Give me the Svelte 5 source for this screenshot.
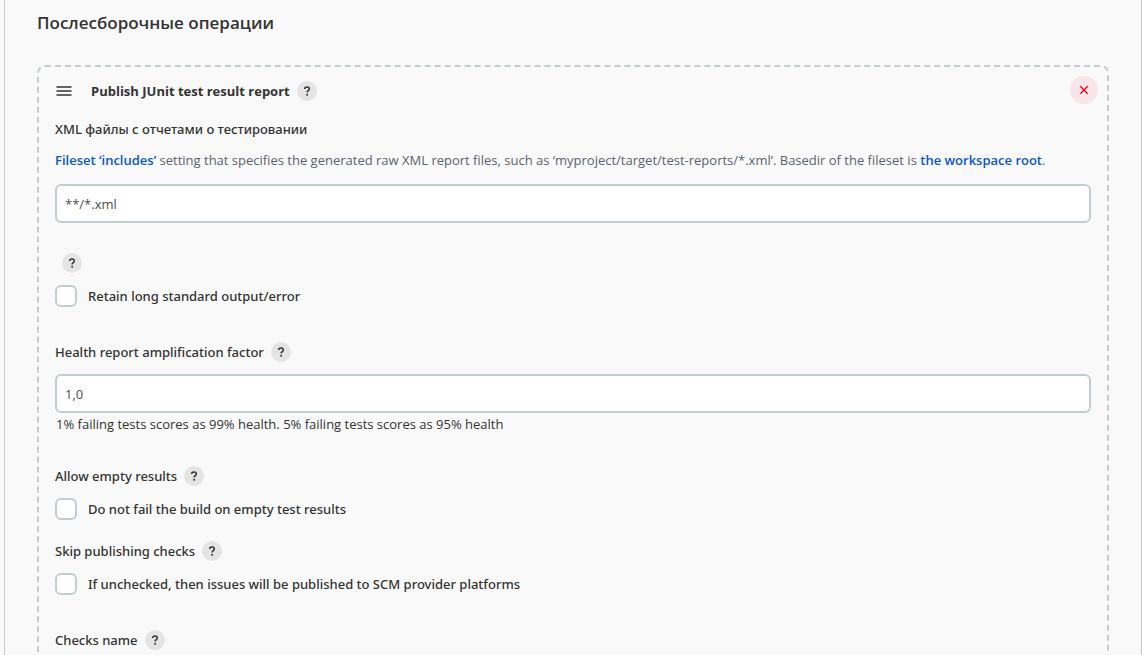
<script>
  let reports = $state('**/*.xml');
  let factor = $state('1,0');
  let retainOutput = $state(false);
  let allowEmpty = $state(false);
  let skipChecks = $state(false);
</script>

{#snippet help(topic)}
  <button type="button" class="help" aria-label={'Help for feature: ' + topic}>
    <svg viewBox="0 0 20 20" aria-hidden="true">
      <path d="M7.7 8.1C7.7 6.8 8.6 6 10 6s2.3.8 2.3 2c0 1.7-2.2 1.7-2.2 3.6" />
      <circle cx="10.1" cy="13.8" r="1" />
    </svg>
  </button>
{/snippet}

<main class="panel">
  <h2 class="section-title">Послесборочные операции</h2>

  <section class="chunk">
    <button type="button" class="remove" aria-label="Remove">
      <svg viewBox="0 0 28 28" aria-hidden="true">
        <path d="M10.3 10.3l7.4 7.4M17.7 10.3l-7.4 7.4" />
      </svg>
    </button>

    <header class="chunk-header">
      <svg class="drag" viewBox="0 0 16 10" aria-hidden="true">
        <path d="M.5 1h15M.5 5h15M.5 9h15" />
      </svg>
      <h3 class="chunk-title">Publish JUnit test result report</h3>
      {@render help('Publish JUnit test result report')}
    </header>

    <div class="field">
      <label class="label" for="reports">XML файлы с отчетами о тестировании</label>
      <p class="description">
        <a href="#includes">Fileset ‘includes’</a> setting that specifies the generated raw XML report files, such as ‘myproject/target/test-reports/*.xml’. Basedir of the fileset is <a href="#workspace">the workspace root</a>.
      </p>
      <input class="text" id="reports" type="text" bind:value={reports} />
    </div>

    <div class="field spaced">
      <div class="label-row">{@render help('Retain long standard output/error')}</div>
      <label class="check">
        <input type="checkbox" bind:checked={retainOutput} />
        <span>Retain long standard output/error</span>
      </label>
    </div>

    <div class="field wide">
      <div class="label-row">
        <label class="label" for="factor">Health report amplification factor</label>
        {@render help('Health report amplification factor')}
      </div>
      <input class="text after-label" id="factor" type="text" bind:value={factor} />
      <p class="note">1% failing tests scores as 99% health. 5% failing tests scores as 95% health</p>
    </div>

    <div class="field spaced">
      <div class="label-row">
        <span class="label">Allow empty results</span>
        {@render help('Allow empty results')}
      </div>
      <label class="check">
        <input type="checkbox" bind:checked={allowEmpty} />
        <span>Do not fail the build on empty test results</span>
      </label>
    </div>

    <div class="field near">
      <div class="label-row">
        <span class="label">Skip publishing checks</span>
        {@render help('Skip publishing checks')}
      </div>
      <label class="check">
        <input type="checkbox" bind:checked={skipChecks} />
        <span>If unchecked, then issues will be published to SCM provider platforms</span>
      </label>
    </div>

    <div class="field wide">
      <div class="label-row">
        <span class="label">Checks name</span>
        {@render help('Checks name')}
      </div>
    </div>
  </section>
</main>

<style>
  :global(body) {
    margin: 0;
    background: #f9f9f9;
  }

  .panel {
    box-sizing: border-box;
    height: 100vh;
    overflow: hidden;
    margin-left: 4px;
    padding: 11px 32px 0;
    border: solid #c3ccd1;
    border-width: 0 1px;
    color: #333;
    font-family: "Open Sans", "Noto Sans", sans-serif;
    font-size: 13px;
    line-height: 20px;
  }

  h2, h3, p {
    margin: 0;
  }

  .section-title {
    font-size: 17px;
    font-weight: 600;
    line-height: 24px;
  }

  .chunk {
    position: relative;
    margin-top: 30px;
    padding: 14px 16px 40px;
    border: 2px dashed #c3ccd1;
    border-radius: 8px;
  }

  .chunk-header {
    display: flex;
    align-items: center;
    margin-bottom: 18px;
  }

  .drag {
    width: 16px;
    height: 10px;
    margin: 0 19px 0 1px;
    fill: none;
    stroke: #333;
    stroke-width: 1.4;
  }

  .chunk-title {
    font-size: 13px;
    font-weight: 700;
  }

  .help {
    width: 20px;
    height: 20px;
    margin-left: 7px;
    padding: 0;
    border: 0;
    border-radius: 50%;
    background: #e4e4e4;
  }

  .help svg {
    display: block;
    width: 20px;
    height: 20px;
  }

  .help path {
    fill: none;
    stroke: #333;
    stroke-width: 1.5;
  }

  .help circle {
    fill: #333;
  }

  .remove {
    position: absolute;
    top: 9px;
    right: 9px;
    width: 28px;
    height: 28px;
    padding: 0;
    border: 0;
    border-radius: 50%;
    background: #f7e5e7;
  }

  .remove svg {
    display: block;
    width: 28px;
    height: 28px;
    stroke: #e6001f;
    stroke-width: 1.3;
  }

  .label,
  .check {
    font-family: "Noto Sans", "Open Sans", sans-serif;
    font-weight: 500;
  }

  .label {
    display: block;
  }

  .label-row {
    display: flex;
    align-items: center;
  }

  .description {
    margin: 11px 0 14px;
    color: #5b6370;
  }

  .description a {
    color: #0b57c4;
    font-weight: 600;
    text-decoration: none;
  }

  .text {
    display: block;
    box-sizing: border-box;
    width: 100%;
    height: 39px;
    padding: 0 8px;
    border: 2px solid #c3ccd1;
    border-radius: 6px;
    background: #fff;
    color: #4d4d4d;
    font: inherit;
  }

  .after-label {
    margin-top: 12px;
  }

  .note {
    padding: 1px 1px 2px;
  }

  .spaced {
    margin-top: 30px;
  }

  .wide {
    margin-top: 35px;
  }

  .near {
    margin-top: 21px;
  }

  .check {
    display: flex;
    align-items: center;
    width: fit-content;
    margin-top: 12px;
    gap: 11px;
  }

  .check input {
    appearance: none;
    box-sizing: border-box;
    width: 22px;
    height: 22px;
    margin: 0;
    border: 2px solid #c3ccd1;
    border-radius: 6px;
    background: #fff;
  }

  .check input:checked {
    background: #0b57c4;
  }
</style>
